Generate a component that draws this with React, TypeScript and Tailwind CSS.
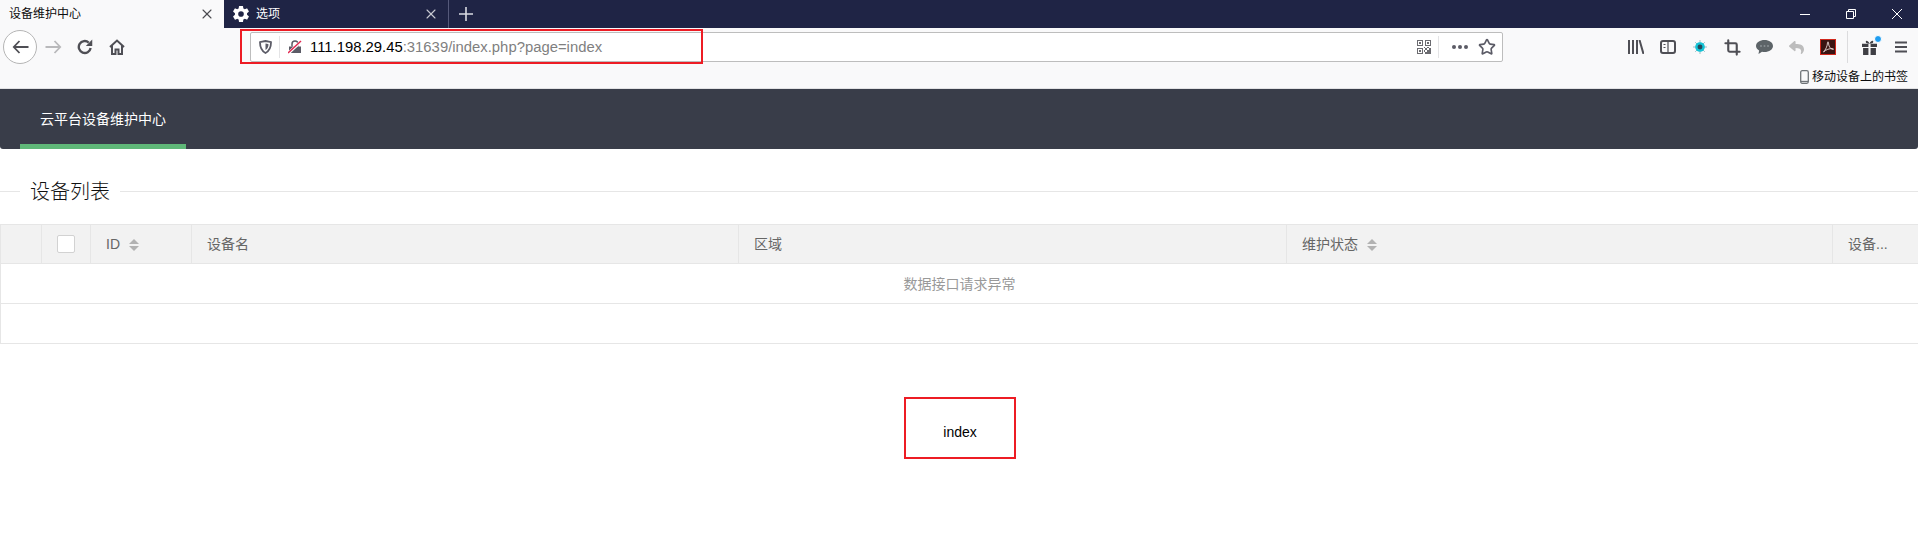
import { Crop, Star, X } from 'lucide-react';
import { FaReply } from 'react-icons/fa';
import { IoSettingsSharp } from 'react-icons/io5';

const cjk = "font-['Liberation_Sans','Noto_Sans_CJK_SC',sans-serif]";

function ToolSlot({ children }: { children: React.ReactNode }) {
  return <div className="flex h-8 w-8 shrink-0 items-center justify-center">{children}</div>;
}

function SortCaret() {
  return (
    <span className="ml-[9px] inline-flex flex-col gap-[2px] align-middle">
      <span className="h-0 w-0 border-x-[5px] border-b-[5px] border-x-transparent border-b-[#b2b2b2]" />
      <span className="h-0 w-0 border-x-[5px] border-t-[5px] border-x-transparent border-t-[#b2b2b2]" />
    </span>
  );
}

function TabBar() {
  return (
    <div className="flex h-[28px] bg-[#1f2445] text-xs">
      <div className="flex w-[224px] items-center justify-between bg-[#f9f9fa] pl-[9px] pr-[9px] text-[#0c0c0d]">
        <span>设备维护中心</span>
        <X size={16} strokeWidth={1.6} className="text-[#4a4a4f]" />
      </div>
      <div className="flex w-[225px] items-center justify-between border-r border-[#55597a] pl-[8px] pr-[9px] text-white">
        <div className="flex items-center gap-[6px]">
          <IoSettingsSharp size={18} />
          <span>选项</span>
        </div>
        <X size={16} strokeWidth={1.6} className="text-[#c9cad3]" />
      </div>
      <div className="flex w-[34px] items-center justify-center">
        <svg width="14" height="14" viewBox="0 0 14 14" stroke="#d9dae2" strokeWidth="1.6">
          <path d="M7 0v14M0 7h14" />
        </svg>
      </div>
      <div className="flex-1" />
      <WindowButtons />
    </div>
  );
}

function WindowButtons() {
  return (
    <div className="flex items-center gap-[36px] pr-[16px] text-white">
      <svg width="10" height="10" viewBox="0 0 10 10" stroke="#fff">
        <path d="M0 5.5h10" />
      </svg>
      <svg width="10" height="10" viewBox="0 0 10 10" fill="none" stroke="#fff">
        <path d="M.5 2.5h7v7h-7zM2.500 2.500v-2h7v7h-2" />
      </svg>
      <svg width="10" height="10" viewBox="0 0 10 10" stroke="#fff">
        <path d="M0 0l10 10M10 0L0 10" />
      </svg>
    </div>
  );
}

function QrIcon() {
  return (
    <svg width="14" height="14" viewBox="0 0 14 14" fill="#6b6b70">
      <path d="M0 0h6v6H0zM1 1v4h4V1zM2 2h2v2H2z" fillRule="evenodd" />
      <path d="M8 0h6v6H8zM9 1v4h4V1zM10 2h2v2h-2z" fillRule="evenodd" />
      <path d="M0 8h6v6H0zM1 9v4h4V9zM2 10h2v2H2z" fillRule="evenodd" />
      <path d="M7 7h1v1H7zM8 8h2v2H8zM12 8h2v2h-2zM10 10h2v2h-2zM8 12h2v2H8zM12 12h2v2h-2zM10 7h2v1h-2zM7 10h1v2H7zM12 10h2v2h-2zM10 12h2v2h-2z" />
    </svg>
  );
}

function UrlBar() {
  return (
    <div className="flex h-[30px] w-[1253px] shrink-0 items-center rounded-[2px] border border-[#bdbdbd] bg-white">
      <div className="flex h-[22px] w-[29px] items-center justify-center border-r border-[#e4e4e6]">
        <svg width="13" height="14" viewBox="0 0 13 14" fill="none">
          <path d="M1 2.2C3 1.8 4.8 1.2 6.5 1c1.7.2 3.5.8 5.5 1.200 0 4.800-1 8.300-5.500 10.800C2 10.500 1 7 1 2.200z" stroke="#5b5b66" strokeWidth="1.800" />
          <path d="M6.500 3.500c1 .2 2 .4 3 .7 0 2.600-.8 4.400-3 5.800z" fill="#5b5b66" />
        </svg>
      </div>
      <div className="flex w-[30px] items-center justify-center">
        <svg width="14" height="14" viewBox="0 0 14 14">
          <path d="M1 6.500h12V13H1z" fill="#5b5b66" />
          <path d="M4 6.500V4a3 3 0 0 1 6 0v2.500" fill="none" stroke="#5b5b66" strokeWidth="1.500" />
          <path d="M0 13.500L13.500 1" stroke="#fff" strokeWidth="3" />
          <path d="M0 13L13 1" stroke="#e22850" strokeWidth="1.500" />
        </svg>
      </div>
      <div className="flex-1 pt-px text-[14.85px] leading-none text-[#7f7f7f]">
        <span className="text-black">111.198.29.45</span>:31639/index.php?page=index
      </div>
      <div className="flex h-[22px] w-[29px] items-center justify-center border-r border-[#e4e4e6]">
        <QrIcon />
      </div>
      <div className="flex w-[63px] items-center pl-[13px]">
        <svg width="16" height="4" viewBox="0 0 16 4" fill="#5b5b66">
          <circle cx="2" cy="2" r="2" />
          <circle cx="8" cy="2" r="2" />
          <circle cx="14" cy="2" r="2" />
        </svg>
        <Star size={18} strokeWidth={2.2} className="ml-[10px] text-[#5b5b66]" />
      </div>
    </div>
  );
}

function RightTools() {
  return (
    <div className="flex flex-1 items-center justify-end pr-px">
      <ToolSlot>
        <svg width="16" height="14" viewBox="0 0 16 14" stroke="#4f4f55" strokeWidth="2">
          <path d="M1 0v14M5 0v14M9 0v14M11.500 0l4 14" />
        </svg>
      </ToolSlot>
      <ToolSlot>
        <svg width="16" height="14" viewBox="0 0 16 14" fill="none" stroke="#4f4f55" strokeWidth="2">
          <rect x="1" y="1" width="14" height="12" rx="2" />
          <path d="M8 1v12M3.500 4.500h2M3.500 7.500h2" strokeWidth="1.200" />
        </svg>
      </ToolSlot>
      <ToolSlot>
        <svg width="14" height="14" viewBox="0 0 16 16">
          <path d="M8 0v16M0 8h16M2.500 2.500l11 11M13.500 2.500l-11 11" stroke="#8fb6bd" strokeWidth="1" />
          <circle cx="8" cy="8" r="5.500" fill="#12c3d6" />
          <circle cx="8" cy="8" r="2.800" fill="#27495a" />
        </svg>
      </ToolSlot>
      <ToolSlot>
        <Crop size={17} strokeWidth={3} className="text-[#4f4f55]" />
      </ToolSlot>
      <ToolSlot>
        <svg width="17" height="14" viewBox="0 0 17 14">
          <path d="M8.500 0C13 0 17 2.500 17 6c0 3.400-3.800 6-8.500 6-.9 0-1.700-.1-2.500-.3L2.500 14l.6-3.500C1.200 9.400 0 7.800 0 6c0-3.500 4-6 8.500-6z" fill="#5d6468" />
          <circle cx="5" cy="6" r="1" fill="#8a9094" />
          <circle cx="8.500" cy="6" r="1" fill="#8a9094" />
          <circle cx="12" cy="6" r="1" fill="#8a9094" />
        </svg>
      </ToolSlot>
      <ToolSlot>
        <FaReply size={15} className="text-[#bdbdbd]" />
      </ToolSlot>
      <ToolSlot>
        <div className="flex h-4 w-4 items-center justify-center border border-[#d0281c] bg-[#3a1412]">
          <svg width="12" height="12" viewBox="0 0 12 12" fill="none" stroke="#e8d8d6" strokeWidth="0.900">
            <path d="M1.500 11C3.500 9 5.500 5 5.500 1.500c0-1 1-1 1 0C6.500 5 8 8 11 8.500c.8.100.5-1-.5-1-3 0-6.500 1-9 3.500z" />
          </svg>
        </div>
      </ToolSlot>
      <div className="mx-[3px] h-[32px] w-px bg-[#dcdcde]" />
      <div className="ml-[2px]">
        <ToolSlot>
          <div className="relative">
            <svg width="15" height="15" viewBox="0 0 14 14" fill="#3f3f44">
              <path d="M0 3.500h6v3H0zM8 3.500h6v3H8zM1 7.500h5V14H1zM8 7.500h5V14H8z" />
              <path d="M7 3.500C5 3.500 3.500 3 3.500 1.700 3.500.5 5.500 0 7 3.500 8.500 0 10.500.5 10.500 1.700 10.500 3 9 3.500 7 3.500z" />
            </svg>
            <span className="absolute right-[-5px] top-[-5px] h-[8px] w-[8px] rounded-full border border-white bg-[#1f9df0]" />
          </div>
        </ToolSlot>
      </div>
      <ToolSlot>
        <svg width="12" height="12" viewBox="0 0 12 12" stroke="#4f4f55" strokeWidth="2">
          <path d="M0 1.500h12M0 6h12M0 10.500h12" />
        </svg>
      </ToolSlot>
    </div>
  );
}

function Toolbar() {
  return (
    <div className="relative h-[60px] bg-[#f9f9fa]">
      <div className="flex h-[38px] items-center pl-[3px]">
        <div className="flex h-[34px] w-[34px] shrink-0 items-center justify-center rounded-full border border-[#b5b5b5] bg-white">
          <svg width="17" height="14" viewBox="0 0 16 14" fill="none" stroke="#4f4f55" strokeWidth="1.800">
            <path d="M7 1L1.300 7 7 13M1.500 7H16" />
          </svg>
        </div>
        <ToolSlot>
          <svg width="17" height="14" viewBox="0 0 16 14" fill="none" stroke="#b9b9bb" strokeWidth="1.800">
            <path d="M9 1l5.700 6L9 13M14.500 7H0" />
          </svg>
        </ToolSlot>
        <ToolSlot>
          <svg width="16" height="16" viewBox="0 0 15 15" fill="none" stroke="#4f4f55" strokeWidth="2.200">
            <path d="M12.800 8.500A5.600 5.600 0 1 1 11 3.300" />
            <path d="M14.300 .5v6h-6z" fill="#4f4f55" stroke="none" />
          </svg>
        </ToolSlot>
        <ToolSlot>
          <svg width="16" height="16" viewBox="0 0 16 16" fill="none" stroke="#4f4f55" strokeWidth="2">
            <path d="M1 8l7-6.500L15 8M3 6.500V15h3.500v-4.500h3V15H13V6.500" />
          </svg>
        </ToolSlot>
        <div className="w-[117px] shrink-0" />
        <UrlBar />
        <RightTools />
      </div>
      <div className="flex h-[22px] items-center justify-end gap-[3px] pr-[10px] text-xs text-[#0c0c0d]">
        <svg width="9" height="14" viewBox="0 0 9 14" fill="none" stroke="#6f7478" strokeWidth="1.300">
          <rect x="0.700" y="0.700" width="7.600" height="12.600" rx="1.500" />
          <path d="M1 11.500h7" />
        </svg>
        <span>移动设备上的书签</span>
      </div>
      <div className="absolute left-[240px] top-[1px] h-[35px] w-[463px] border-2 border-[#ed1c24]" />
    </div>
  );
}

function DeviceTable() {
  const headCell = 'h-[39px] border-r border-[#e6e6e6] px-[15px] text-left font-normal';
  return (
    <table className="w-full table-fixed border-collapse border-y border-l border-[#e6e6e6] text-sm text-[#666]">
      <colgroup>
        <col className="w-[41px]" />
        <col className="w-[49px]" />
        <col className="w-[101px]" />
        <col className="w-[547px]" />
        <col className="w-[548px]" />
        <col className="w-[546px]" />
        <col />
      </colgroup>
      <thead>
        <tr className="bg-[#f2f2f2]">
          <th className={headCell} />
          <th className={headCell}>
            <span className="block h-[18px] w-[18px] rounded-[2px] border border-[#d2d2d2] bg-white" />
          </th>
          <th className={headCell}>
            ID
            <SortCaret />
          </th>
          <th className={headCell}>设备名</th>
          <th className={headCell}>区域</th>
          <th className={headCell}>
            维护状态
            <SortCaret />
          </th>
          <th className="border-[#e6e6e6] px-[15px] text-left font-normal">设备...</th>
        </tr>
      </thead>
      <tbody>
        <tr className="border-t border-[#e6e6e6]">
          <td colSpan={7} className="h-[40px] text-center text-[#999]">
            数据接口请求异常
          </td>
        </tr>
        <tr className="border-t border-[#e6e6e6]">
          <td colSpan={7} className="h-[40px]" />
        </tr>
      </tbody>
    </table>
  );
}

export default function App() {
  return (
    <div className={`h-[560px] overflow-hidden bg-white ${cjk}`}>
      <TabBar />
      <Toolbar />
      <div className="flex h-[61px] items-center rounded-b-[3px] border-t border-[#e2e2e4] bg-[#393d49]">
        <div className="relative ml-5 flex h-full items-center px-5 text-sm text-white">
          云平台设备维护中心
          <span className="absolute inset-x-0 bottom-0 h-[5px] bg-[#5fb878]" />
        </div>
      </div>
      <fieldset className="mt-[27px] border-t border-[#e6e6e6]">
        <legend className="ml-5 px-2.5 pt-[3px] text-xl font-light leading-[27px] text-[#111]">设备列表</legend>
      </fieldset>
      <div className="mt-[18px]">
        <DeviceTable />
      </div>
      <div className="mt-[53px] flex justify-center pl-[2px]">
        <div className="flex h-[62px] w-[112px] items-center justify-center border-2 border-[#ed1c24] pt-[7px] text-sm text-black">
          index
        </div>
      </div>
    </div>
  );
}
